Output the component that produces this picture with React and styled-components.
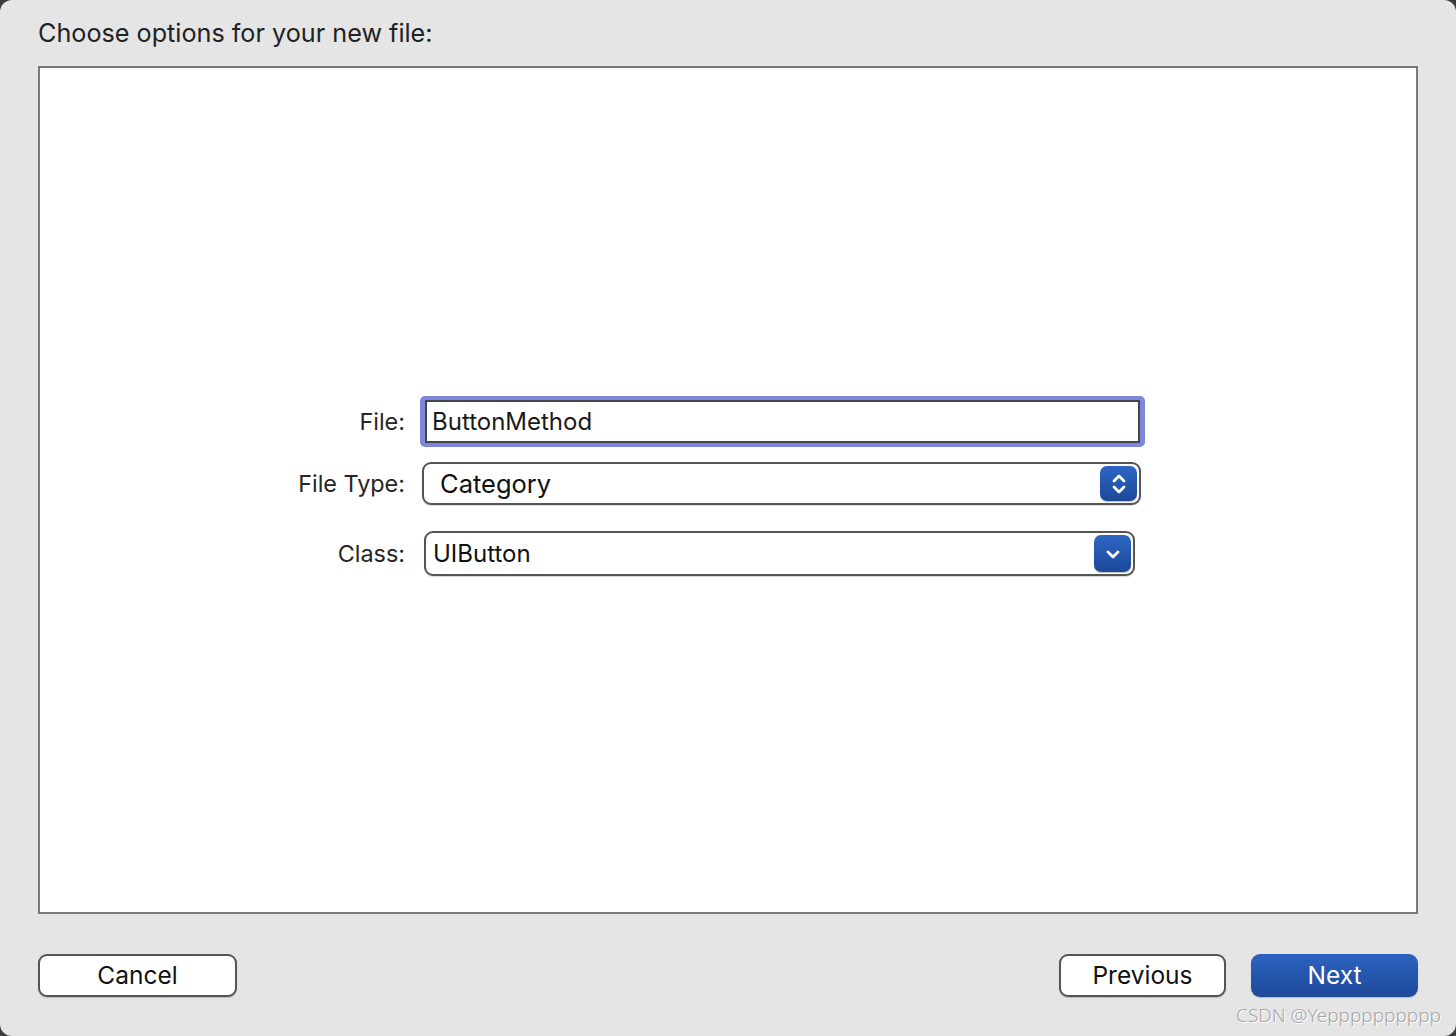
import React from "react";
import styled, { createGlobalStyle } from "styled-components";

const Global = createGlobalStyle`
  html, body { margin: 0; padding: 0; background: #3c3c3c; }
  body { font-family: Inter, "Noto Sans", "Liberation Sans", sans-serif; }
  * { box-sizing: border-box; }
`;

const Window = styled.div`
  width: 1456px;
  height: 1036px;
  background: #e5e5e5;
  border-radius: 12px;
  display: flex;
  flex-direction: column;
  padding: 0 38px;
  position: relative;
  overflow: hidden;
`;

const Title = styled.div`
  margin-top: 17px;
  height: 32px;
  line-height: 32px;
  font-size: 25.2px;
  color: #222222;
`;

const OptionsBox = styled.div`
  margin-top: 17px;
  height: 848px;
  background: #ffffff;
  border: 2px solid #787878;
  display: flex;
  flex-direction: column;
  padding-top: 328px;
`;

const Row = styled.div`
  display: flex;
  align-items: center;
  margin-top: ${(p) => p.$mt || 0}px;
  height: ${(p) => p.$h}px;
`;

const Label = styled.div`
  width: 365px;
  text-align: right;
  font-size: 23.4px;
  color: #262626;
`;

const FocusRing = styled.div`
  margin-left: ${(p) => p.$ml}px;
  width: ${(p) => p.$w}px;
  height: 51px;
  padding: 4px 5px;
  border-radius: 5px;
  background: #7f87dc;
  display: flex;
`;

const TextField = styled.div`
  flex: 1;
  background: #fff;
  border: 2px solid #454545;
  display: flex;
  align-items: center;
  padding-left: 5px;
  font-size: 24px;
  color: #1a1a1a;
`;

const Popup = styled.div`
  margin-left: ${(p) => p.$ml}px;
  width: ${(p) => p.$w}px;
  height: ${(p) => p.$h}px;
  border: 2px solid #555;
  border-radius: 9px;
  background: #fff;
  display: flex;
  align-items: center;
  padding-left: ${(p) => p.$pl}px;
  padding-right: 2px;
  font-size: ${(p) => p.$fs}px;
  color: #111;
  box-shadow: 0 1px 1px rgba(0, 0, 0, 0.15);
`;

const PopupText = styled.span`
  flex: 1;
`;

const BlueKnob = styled.div`
  width: 37px;
  height: ${(p) => p.$h}px;
  border-radius: 7px;
  background: linear-gradient(#2e66c6, #1c4897);
  display: flex;
  align-items: center;
  justify-content: center;
  box-shadow: 0 1px 1px rgba(0, 0, 0, 0.25);
`;

const Footer = styled.div`
  margin-top: 40px;
  display: flex;
  align-items: center;
  gap: 25px;
`;

const Spacer = styled.div`
  flex: 1;
`;

const PushButton = styled.button`
  width: ${(p) => p.$w}px;
  height: 43px;
  border-radius: 9px;
  font-family: Inter, "Noto Sans", "Liberation Sans", sans-serif;
  font-size: 24.5px;
  display: flex;
  align-items: center;
  justify-content: center;
  padding: 0 0 2px;
  cursor: default;
  border: ${(p) => (p.$primary ? "none" : "2px solid #555")};
  background: ${(p) =>
    p.$primary ? "linear-gradient(#2c62c1, #1e4a99)" : "#ffffff"};
  color: ${(p) => (p.$primary ? "#ffffff" : "#111")};
  box-shadow: 0 1px 1px rgba(0, 0, 0, 0.2);
`;

const Watermark = styled.div`
  position: absolute;
  right: 15px;
  bottom: 8px;
  font-family: "Noto Sans", "Liberation Sans", sans-serif;
  font-size: 19px;
  font-weight: 300;
  color: #a6a6a6;
  text-shadow: 1px 1px 0 #ffffff;
`;

const UpDown = () => (
  <svg width="18" height="26" viewBox="0 0 18 26" fill="none">
    <path d="M4 10 L9 5 L14 10" stroke="#fff" strokeWidth="2.8" strokeLinecap="round" strokeLinejoin="round" />
    <path d="M4 16 L9 21 L14 16" stroke="#fff" strokeWidth="2.8" strokeLinecap="round" strokeLinejoin="round" />
  </svg>
);

const Down = () => (
  <svg width="18" height="14" viewBox="0 0 18 14" fill="none">
    <path d="M4 5 L9 10 L14 5" stroke="#fff" strokeWidth="2.8" strokeLinecap="round" strokeLinejoin="round" />
  </svg>
);

export default function App() {
  return (
    <>
      <Global />
      <Window>
        <Title>Choose options for your new file:</Title>
        <OptionsBox>
          <Row $h={51}>
            <Label>File:</Label>
            <FocusRing $ml={15} $w={725}>
              <TextField>ButtonMethod</TextField>
            </FocusRing>
          </Row>
          <Row $h={43} $mt={15}>
            <Label>File Type:</Label>
            <Popup $ml={17} $w={719} $h={43} $pl={16} $fs={25.5}>
              <PopupText>Category</PopupText>
              <BlueKnob $h={35}>
                <UpDown />
              </BlueKnob>
            </Popup>
          </Row>
          <Row $h={45} $mt={26}>
            <Label>Class:</Label>
            <Popup $ml={19} $w={711} $h={45} $pl={7} $fs={24}>
              <PopupText>UIButton</PopupText>
              <BlueKnob $h={37}>
                <Down />
              </BlueKnob>
            </Popup>
          </Row>
        </OptionsBox>
        <Footer>
          <PushButton $w={199}>Cancel</PushButton>
          <Spacer />
          <PushButton $w={167}>Previous</PushButton>
          <PushButton $w={167} $primary>
            Next
          </PushButton>
        </Footer>
        <Watermark>CSDN @Yepppppppppp</Watermark>
      </Window>
    </>
  );
}
